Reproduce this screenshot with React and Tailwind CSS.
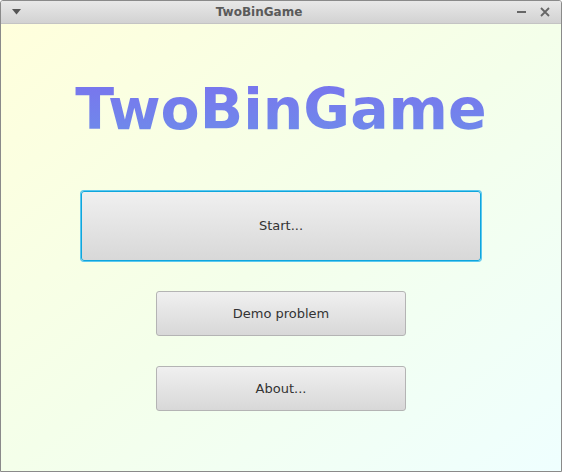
import React from "react";

function WinButton({ label, wide, focused }) {
  return (
    <button
      type="button"
      className={
        (wide ? "w-[400px] h-[70px] " : "w-[250px] h-[45px] ") +
        (focused
          ? "border border-[#0fa6dc] shadow-[0_0_0_1px_#5cc8ef] "
          : "border border-[#b4b4b4] ") +
        "rounded-[3px] bg-gradient-to-b from-[#f0f0f0] to-[#d8d8d8] text-[13px] text-[#333] flex items-center justify-center"
      }
      style={{ fontFamily: '"DejaVu Sans", Verdana, sans-serif' }}
    >
      {label}
    </button>
  );
}

export default function App() {
  return (
    <div
      className="w-[562px] h-[472px] flex flex-col border border-[#8a8a8a] rounded-t-[3px] overflow-hidden"
      style={{ fontFamily: '"DejaVu Sans", sans-serif' }}
    >
      {/* title bar */}
      <div className="h-[23px] shrink-0 flex items-center px-[10px] bg-gradient-to-b from-[#e8e8e8] to-[#d2d2d2] border-b border-[#c4c4c4]">
        <div className="w-[20px] flex justify-start pl-[1px]">
          <svg width="9" height="6" viewBox="0 0 9 6">
            <path d="M0 0 H9 L4.5 5.5 Z" fill="#555" />
          </svg>
        </div>
        <div className="flex-1 text-center text-[12px] font-bold text-[#5a5a5a] pr-[30px]">
          TwoBinGame
        </div>
        <div className="flex items-center gap-[13px] pr-[1px]">
          <svg width="10" height="10" viewBox="0 0 10 10">
            <rect x="0" y="4" width="9" height="2" fill="#666" />
          </svg>
          <svg width="10" height="10" viewBox="0 0 10 10">
            <path d="M1 1 L9 9 M9 1 L1 9" stroke="#666" strokeWidth="1.8" />
          </svg>
        </div>
      </div>

      {/* content */}
      <div className="flex-1 flex flex-col items-center bg-gradient-to-br from-[#ffffdc] via-[#f4ffea] to-[#efffff]">
        <h1
          className="mt-[52px] text-[57px] leading-[66px] font-bold bg-gradient-to-b from-[#7a72ee] to-[#6c8dea] bg-clip-text text-transparent"
          style={{ fontFamily: '"DejaVu Sans", sans-serif' }}
        >
          TwoBinGame
        </h1>
        <div className="mt-[49px]">
          <WinButton label="Start..." wide focused />
        </div>
        <div className="mt-[30px]">
          <WinButton label="Demo problem" />
        </div>
        <div className="mt-[30px]">
          <WinButton label="About..." />
        </div>
      </div>
    </div>
  );
}
